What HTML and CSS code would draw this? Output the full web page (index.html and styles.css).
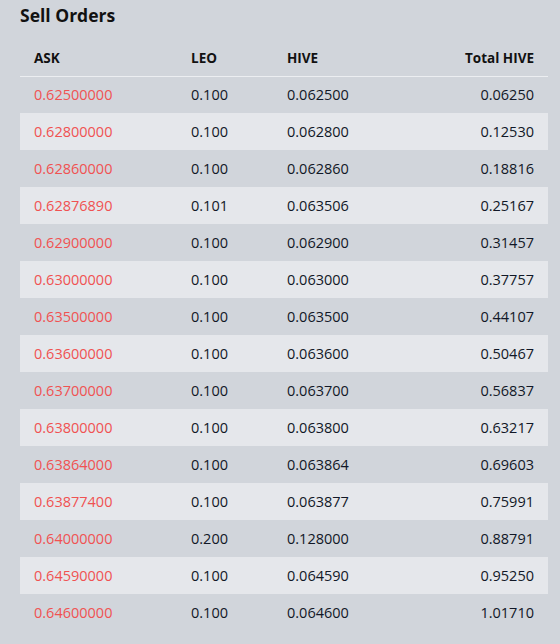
FILE: index.html
```html
<!DOCTYPE html>
<html>
<head>
<meta charset="utf-8">
<link rel="stylesheet" href="styles.css">
</head>
<body>
<div class="panel">
  <h2 class="title">Sell Orders</h2>
  <table class="orders">
    <colgroup>
      <col class="c1"><col class="c2"><col class="c3"><col class="c4">
    </colgroup>
    <thead>
      <tr><th>ASK</th><th>LEO</th><th>HIVE</th><th class="num">Total HIVE</th></tr>
    </thead>
    <tbody>
      <tr><td class="ask">0.62500000</td><td>0.100</td><td>0.062500</td><td class="num">0.06250</td></tr>
      <tr><td class="ask">0.62800000</td><td>0.100</td><td>0.062800</td><td class="num">0.12530</td></tr>
      <tr><td class="ask">0.62860000</td><td>0.100</td><td>0.062860</td><td class="num">0.18816</td></tr>
      <tr><td class="ask">0.62876890</td><td>0.101</td><td>0.063506</td><td class="num">0.25167</td></tr>
      <tr><td class="ask">0.62900000</td><td>0.100</td><td>0.062900</td><td class="num">0.31457</td></tr>
      <tr><td class="ask">0.63000000</td><td>0.100</td><td>0.063000</td><td class="num">0.37757</td></tr>
      <tr><td class="ask">0.63500000</td><td>0.100</td><td>0.063500</td><td class="num">0.44107</td></tr>
      <tr><td class="ask">0.63600000</td><td>0.100</td><td>0.063600</td><td class="num">0.50467</td></tr>
      <tr><td class="ask">0.63700000</td><td>0.100</td><td>0.063700</td><td class="num">0.56837</td></tr>
      <tr><td class="ask">0.63800000</td><td>0.100</td><td>0.063800</td><td class="num">0.63217</td></tr>
      <tr><td class="ask">0.63864000</td><td>0.100</td><td>0.063864</td><td class="num">0.69603</td></tr>
      <tr><td class="ask">0.63877400</td><td>0.100</td><td>0.063877</td><td class="num">0.75991</td></tr>
      <tr><td class="ask">0.64000000</td><td>0.200</td><td>0.128000</td><td class="num">0.88791</td></tr>
      <tr><td class="ask">0.64590000</td><td>0.100</td><td>0.064590</td><td class="num">0.95250</td></tr>
      <tr><td class="ask">0.64600000</td><td>0.100</td><td>0.064600</td><td class="num">1.01710</td></tr>
    </tbody>
  </table>
</div>
</body>
</html>
```
FILE: styles.css
```css
html, body {
  margin: 0;
  background: #d1d5db;
}
body {
  font-family: "Open Sans", "Noto Sans", sans-serif;
  color: #111827;
}
.panel {
  padding: 3px 12px 0 20px;
}
.title {
  margin: 0;
  font-size: 17.5px;
  font-weight: 700;
  line-height: 24px;
  color: #111;
}
.orders {
  margin-top: 15px;
  width: 528px;
  border-collapse: collapse;
  table-layout: fixed;
  font-size: 14.5px;
}
.c1 { width: 171px; }
.c2 { width: 96px; }
.c3 { width: 120px; }
.c4 { width: 141px; }
.orders th {
  text-align: left;
  font-size: 13.5px;
  font-weight: 700;
  height: 34px;
  padding: 0 14px 1px 14px;
  box-sizing: border-box;
  vertical-align: middle;
  border-bottom: 1px solid #eceef1;
  color: #111;
}
.orders th:first-child, .orders td:first-child { padding-left: 14px; }
.orders th:nth-child(2), .orders td:nth-child(2),
.orders th:nth-child(3), .orders td:nth-child(3) { padding-left: 0; }
.orders td {
  height: 37px;
  padding: 0 14px;
  vertical-align: middle;
  box-sizing: border-box;
}
.orders tbody tr:nth-child(even) {
  background: #e5e7eb;
}
.orders .num { text-align: right; }
.orders .ask { color: #f05252; }
```
